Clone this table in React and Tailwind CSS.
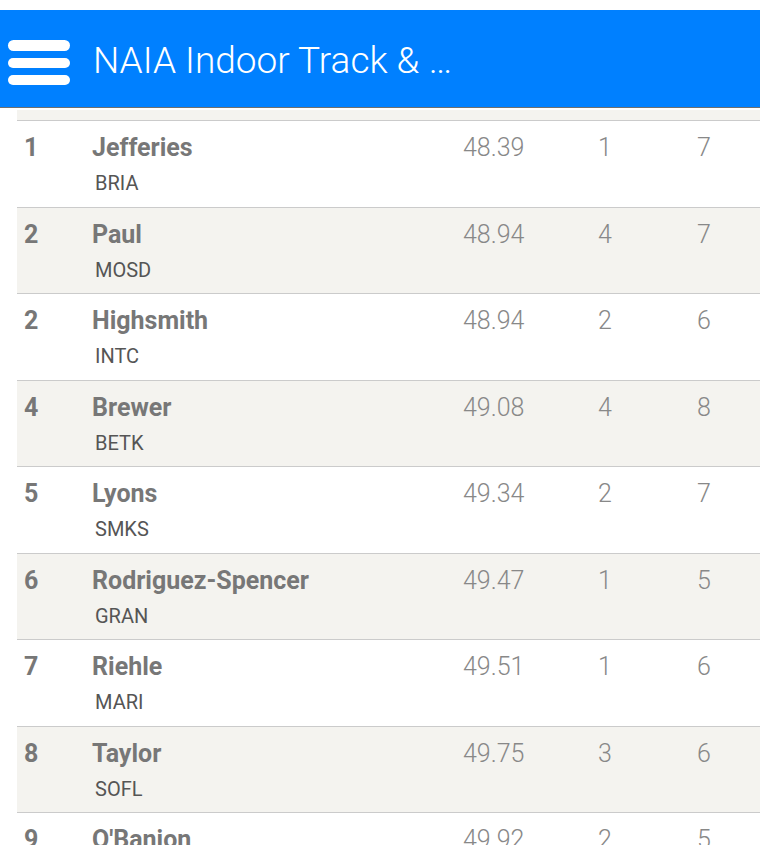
const results = [
  { place: '1', name: 'Jefferies', team: 'BRIA', time: '48.39', heat: '1', lane: '7' },
  { place: '2', name: 'Paul', team: 'MOSD', time: '48.94', heat: '4', lane: '7' },
  { place: '2', name: 'Highsmith', team: 'INTC', time: '48.94', heat: '2', lane: '6' },
  { place: '4', name: 'Brewer', team: 'BETK', time: '49.08', heat: '4', lane: '8' },
  { place: '5', name: 'Lyons', team: 'SMKS', time: '49.34', heat: '2', lane: '7' },
  { place: '6', name: 'Rodriguez-Spencer', team: 'GRAN', time: '49.47', heat: '1', lane: '5' },
  { place: '7', name: 'Riehle', team: 'MARI', time: '49.51', heat: '1', lane: '6' },
  { place: '8', name: 'Taylor', team: 'SOFL', time: '49.75', heat: '3', lane: '6' },
  { place: '9', name: "O'Banion", team: 'BELL', time: '49.92', heat: '2', lane: '5' },
];

const ResultRow = ({ row, striped }) => (
  <div
    className={`flex h-[86.5px] border-t border-[#cbcbcb] pl-[7px] pt-[12px] ${
      striped ? 'bg-[#f4f3ef]' : 'bg-white'
    }`}
  >
    <div className="w-[68px] text-[25px] leading-[30px] font-bold text-[#777777]">{row.place}</div>
    <div className="w-[371px]">
      <div className="text-[25px] leading-[30px] font-bold text-[#777777]">{row.name}</div>
      <div className="mt-[8px] pl-[3px] text-[20px] leading-[24px] text-[#555555]">{row.team}</div>
    </div>
    <div className="w-[135px] text-[25px] leading-[30px] font-light text-[#888888]">{row.time}</div>
    <div className="w-[99px] text-[25px] leading-[30px] font-light text-[#888888]">{row.heat}</div>
    <div className="text-[25px] leading-[30px] font-light text-[#888888]">{row.lane}</div>
  </div>
);

export default function App() {
  return (
    <div className="h-[845px] overflow-hidden bg-white font-['Roboto',sans-serif]">
      <div className="h-[10px]" />
      <header className="flex h-[98px] items-center border-b border-[#6f6f6f] bg-[#0080ff]">
        <button className="ml-[8px] mt-[8px] flex flex-col gap-[7px]">
          <span className="block h-[11px] w-[62px] rounded-full bg-white" />
          <span className="block h-[10px] w-[62px] rounded-full bg-white" />
          <span className="block h-[10px] w-[62px] rounded-full bg-white" />
        </button>
        <h1 className="ml-[23px] mt-[3px] text-[37px] font-light leading-none text-white">
          NAIA Indoor Track &amp; …
        </h1>
      </header>

      <div className="ml-[17px] mt-[2px]">
        <div className="h-[10px] bg-[#f4f3ef]" />
        {results.map((row, i) => (
          <ResultRow key={i} row={row} striped={i % 2 === 1} />
        ))}
      </div>
    </div>
  );
}
